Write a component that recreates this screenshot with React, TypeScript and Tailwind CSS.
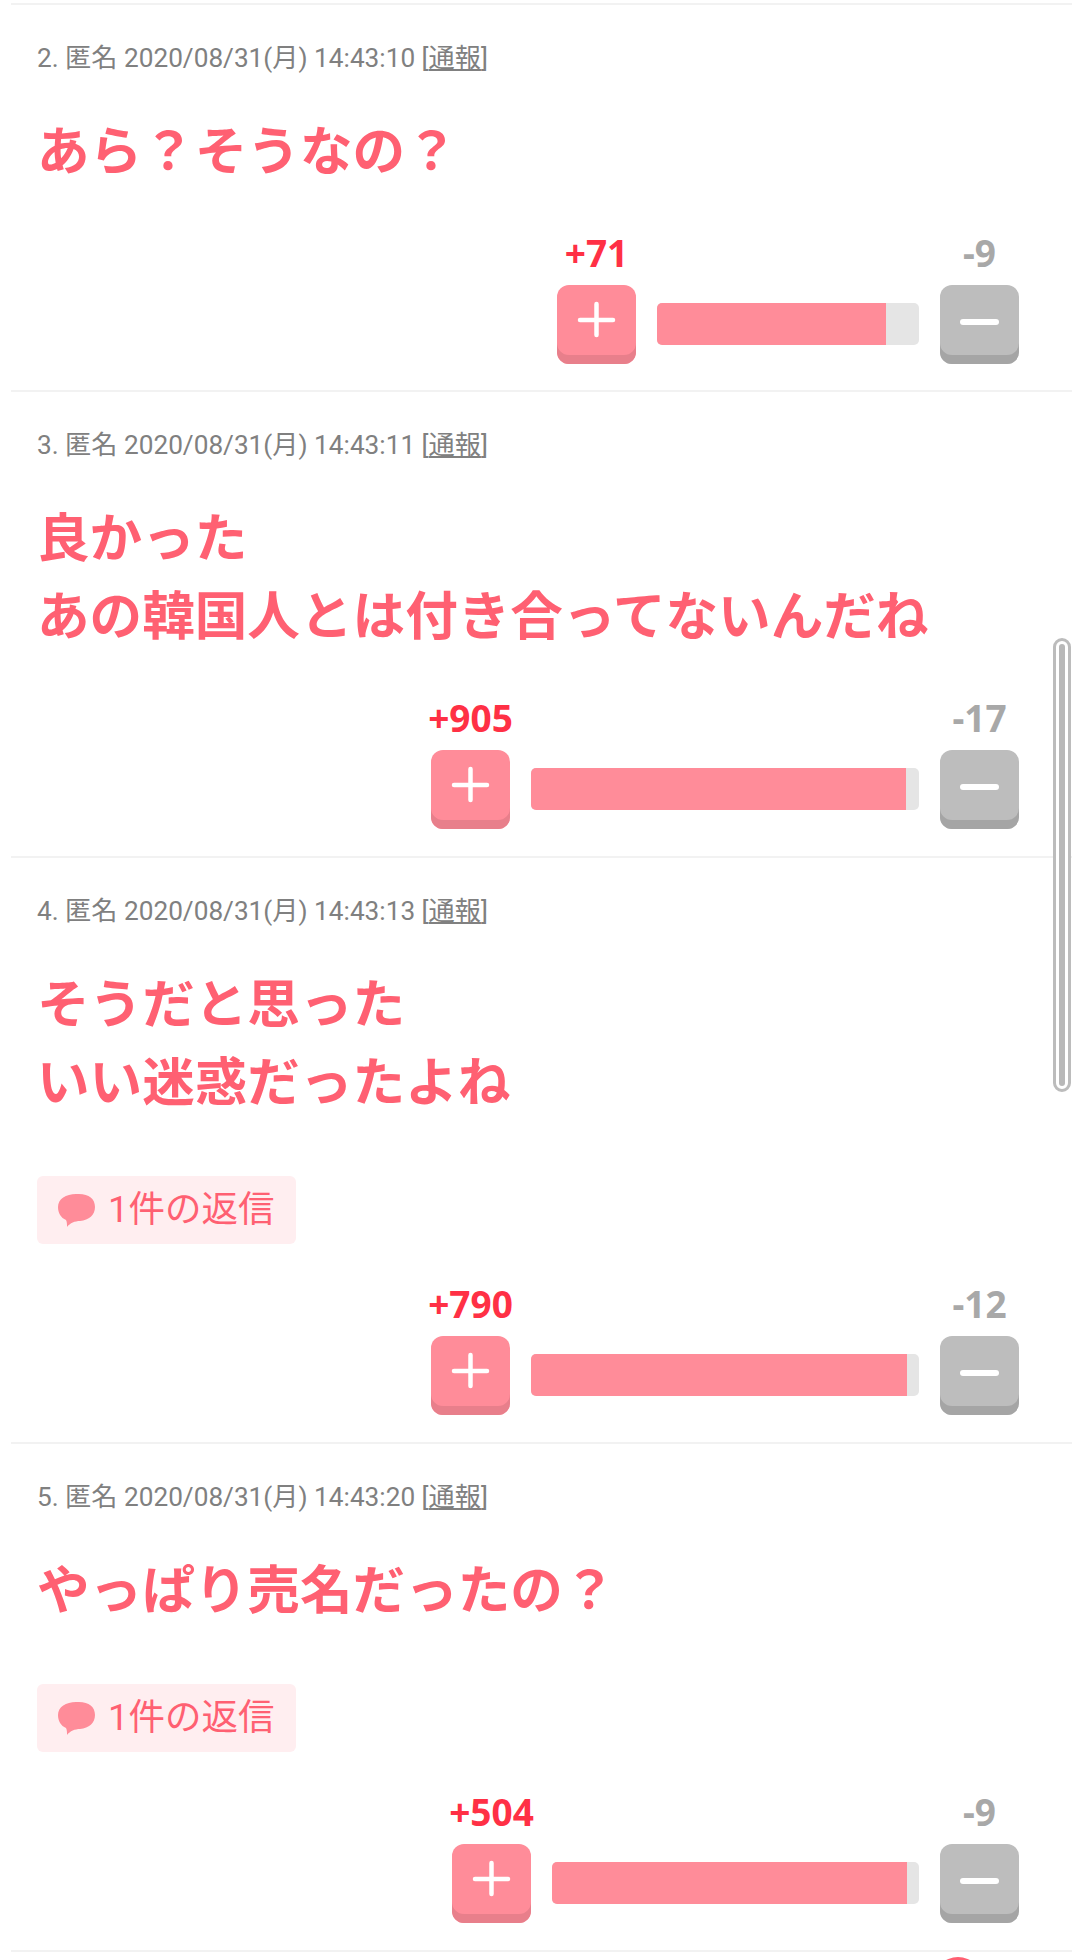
const items = [
  { no: 2, time: "14:43:10", lines: ["あら？そうなの？"], plus: 71, minus: 9, barWidth: 262, fill: 229 },
  { no: 3, time: "14:43:11", lines: ["良かった", "あの韓国人とは付き合ってないんだね"], plus: 905, minus: 17, barWidth: 388, fill: 375 },
  { no: 4, time: "14:43:13", lines: ["そうだと思った", "いい迷惑だったよね"], plus: 790, minus: 12, barWidth: 388, fill: 376, replies: 1 },
  { no: 5, time: "14:43:20", lines: ["やっぱり売名だったの？"], plus: 504, minus: 9, barWidth: 367, fill: 355, replies: 1 },
];

function VoteButton({ type }: { type: "plus" | "minus" }) {
  const isPlus = type === "plus";
  return (
    <div
      className={
        isPlus
          ? "w-[79px] h-[79px] rounded-[12px] bg-[#ff8c99] shadow-[inset_0_-9px_0_#e87f8b]"
          : "w-[79px] h-[79px] rounded-[12px] bg-[#bdbdbd] shadow-[inset_0_-9px_0_#a5a5a5]"
      }
    >
      <svg width="79" height="79" viewBox="0 0 79 79" fill="none" stroke="#fff" strokeLinecap="round">
        {isPlus ? (
          <>
            <path d="M23 35h33" strokeWidth="4.5" />
            <path d="M39.5 19v31" strokeWidth="4.5" />
          </>
        ) : (
          <path d="M23 37h33" strokeWidth="6" />
        )}
      </svg>
    </div>
  );
}

function ReplyBadge({ count }: { count: number }) {
  return (
    <div className="mt-[54px] flex w-[259px] h-[68px] items-center rounded-[6px] bg-[#ffeef0] pl-[21px]">
      <svg width="37" height="33" viewBox="0 0 37 33" className="mr-[13px]">
        <path
          d="M18 0h3c10 0 16 5 16 13s-6 13-15 14c-5 0-10 2-13 6 0-3 0-5-1-7C3 24 0 19 0 13 0 5 8 0 18 0z"
          fill="#ff8c99"
        />
      </svg>
      <span className="text-[36.5px] leading-none text-[#ff6072]">{count}件の返信</span>
    </div>
  );
}

function Item({ item, first }: { item: (typeof items)[number]; first: boolean }) {
  return (
    <div className={first ? "border-b-2 border-[#f2f2f2] pl-[26px] pr-[53px] pt-[38px] pb-[26px]" : "border-b-2 border-[#f2f2f2] pl-[26px] pr-[53px] pt-[38px] pb-[27px]"}>
      <div className="text-[26.2px] leading-[30px] text-[#808080]">
        {item.no}. 匿名 2020/08/31(月) {item.time} [<span className="underline">通報</span>]
      </div>
      <div className="mt-[40px] text-[52.6px] leading-[78px] font-bold text-[#ff6072]">
        {item.lines.map((line) => (
          <div key={line}>{line}</div>
        ))}
      </div>
      {item.replies ? <ReplyBadge count={item.replies} /> : null}
      <div className={item.replies ? "mt-[41px] flex justify-end gap-[21px]" : "mt-[43px] flex justify-end gap-[21px]"}>
        <div className="flex w-[79px] flex-col items-center">
          <div className="h-[40px] whitespace-nowrap font-['Noto_Sans',sans-serif] text-[37px] leading-[38px] font-bold text-[#ff3045]">+{item.plus}</div>
          <div className="mt-[11px]">
            <VoteButton type="plus" />
          </div>
        </div>
        <div className="mt-[69px] h-[42px] overflow-hidden rounded-[5px] bg-[#e5e5e5]" style={{ width: item.barWidth }}>
          <div className="h-full bg-[#ff8c99]" style={{ width: item.fill }} />
        </div>
        <div className="flex w-[79px] flex-col items-center">
          <div className="h-[40px] whitespace-nowrap font-['Noto_Sans',sans-serif] text-[37px] leading-[38px] font-bold text-[#a8a8a8]">-{item.minus}</div>
          <div className="mt-[11px]">
            <VoteButton type="minus" />
          </div>
        </div>
      </div>
    </div>
  );
}

export default function App() {
  return (
    <div className="relative h-[1960px] overflow-hidden bg-white pl-[11px] pr-[2px] font-['Roboto','Noto_Sans_CJK_JP',sans-serif]">
      <div className="h-[5px] border-b-2 border-[#f2f2f2]" />
      {items.map((item, i) => (
        <Item key={item.no} item={item} first={i === 0} />
      ))}
      <div className="absolute left-[1053px] top-[638px] flex h-[454px] w-[18px] justify-center rounded-full border-[3px] border-[#bcbcbc] bg-white p-[3px]">
        <div className="h-full w-full rounded-full bg-[#b8b8b8]" />
      </div>
      <div className="absolute left-[933px] top-[1957px] h-[50px] w-[50px] rounded-full bg-[#ff6072]" />
    </div>
  );
}
